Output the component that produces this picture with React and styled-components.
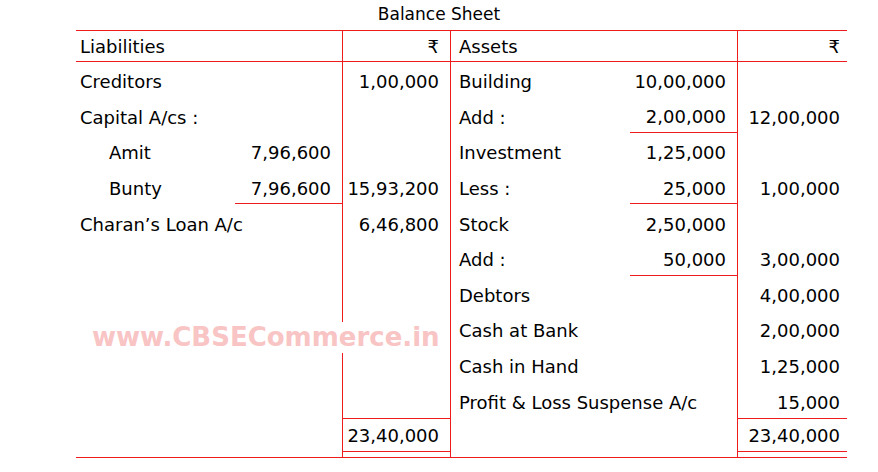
import React from 'react'
import styled, { createGlobalStyle } from 'styled-components'

const RED = '#ee1c1c'

const Global = createGlobalStyle`
  body {
    margin: 0;
    background: #fff;
    color: #000;
    font-family: "DejaVu Sans", "Noto Sans", sans-serif;
  }
`

const Page = styled.div`
  width: 878px;
  height: 472px;
`

const Title = styled.div`
  width: 878px;
  height: 30px;
  line-height: 28px;
  text-align: center;
  font-size: 17px;
`

const Sheet = styled.div`
  position: relative;
  margin-left: 76px;
  width: 771px;
  display: grid;
  grid-template-columns: 159px 107px 109px 179px 107px 110px;
  grid-template-rows: 31px repeat(10, 35.6px) 39px;
  border-top: 1px solid ${RED};
  border-bottom: 1px solid ${RED};
  font-size: 18px;
`

// column kinds: name, sub, amt
const Cell = styled.div`
  box-sizing: border-box;
  display: flex;
  align-items: center;
  justify-content: ${p => (p.$kind === 'name' ? 'flex-start' : 'flex-end')};
  padding: 4px ${p => (p.$kind === 'amt' ? (p.$side === 'r' ? '7px' : '11px') : p.$kind === 'sub' ? '11px' : '0')} 0
    ${p => (p.$kind === 'name' ? (p.$indent ? '33px' : p.$side === 'r' ? '8px' : '4px') : '0')};
  white-space: nowrap;
  border-left: ${p => (p.$kind === 'amt' ? `1px solid ${RED}` : 'none')};
  border-right: ${p => (p.$kind === 'amt' && p.$side === 'l' ? `1px solid ${RED}` : 'none')};
  border-bottom: ${p => (p.$head || p.$under ? `1px solid ${RED}` : 'none')};
  ${p => p.$head && 'padding-top: 1px;'}
`

const TotalCell = styled(Cell)`
  align-items: flex-start;
  padding-top: 6px;
  border-top: ${p => (p.$kind === 'amt' ? `1px solid ${RED}` : 'none')};
  background: ${p =>
    p.$kind === 'amt' ? `linear-gradient(${RED}, ${RED}) no-repeat 0 32px / 100% 1px` : 'none'};
`

const Watermark = styled.div`
  position: absolute;
  left: 10px;
  top: 291px;
  height: 31px;
  padding: 0 6px;
  background: #fff;
  color: #f8c4c4;
  font-family: "DejaVu Sans", sans-serif;
  font-weight: bold;
  font-size: 26px;
  line-height: 31px;
`

const rows = [
  { l: ['Creditors', '', '1,00,000'], r: ['Building', '10,00,000', ''] },
  { l: ['Capital A/cs :', '', ''], r: ['Add :', '2,00,000', '12,00,000'], rUnder: true },
  { l: ['Amit', '7,96,600', ''], lIndent: true, r: ['Investment', '1,25,000', ''] },
  { l: ['Bunty', '7,96,600', '15,93,200'], lIndent: true, lUnder: true, r: ['Less :', '25,000', '1,00,000'], rUnder: true },
  { l: ['Charan’s Loan A/c', '', '6,46,800'], r: ['Stock', '2,50,000', ''] },
  { l: ['', '', ''], r: ['Add :', '50,000', '3,00,000'], rUnder: true },
  { l: ['', '', ''], r: ['Debtors', '', '4,00,000'] },
  { l: ['', '', ''], r: ['Cash at Bank', '', '2,00,000'] },
  { l: ['', '', ''], r: ['Cash in Hand', '', '1,25,000'] },
  { l: ['', '', ''], r: ['Profit & Loss Suspense A/c', '', '15,000'] },
]

const kinds = ['name', 'sub', 'amt']

function Side({ side, values, indent, under }) {
  return values.map((v, i) => (
    <Cell
      key={side + i}
      $side={side}
      $kind={kinds[i]}
      $indent={i === 0 && indent}
      $under={i === 1 && under}
    >
      {v}
    </Cell>
  ))
}

export default function App() {
  return (
    <Page>
      <Global />
      <Title>Balance Sheet</Title>
      <Sheet>
        <Cell $head $side="l" $kind="name">Liabilities</Cell>
        <Cell $head $side="l" $kind="sub" />
        <Cell $head $side="l" $kind="amt">₹</Cell>
        <Cell $head $side="r" $kind="name">Assets</Cell>
        <Cell $head $side="r" $kind="sub" />
        <Cell $head $side="r" $kind="amt">₹</Cell>

        {rows.map((row, i) => (
          <React.Fragment key={i}>
            <Side side="l" values={row.l} indent={row.lIndent} under={row.lUnder} />
            <Side side="r" values={row.r} under={row.rUnder} />
          </React.Fragment>
        ))}

        <TotalCell $side="l" $kind="name" />
        <TotalCell $side="l" $kind="sub" />
        <TotalCell $side="l" $kind="amt">23,40,000</TotalCell>
        <TotalCell $side="r" $kind="name" />
        <TotalCell $side="r" $kind="sub" />
        <TotalCell $side="r" $kind="amt">23,40,000</TotalCell>

        <Watermark>www.CBSECommerce.in</Watermark>
      </Sheet>
    </Page>
  )
}
